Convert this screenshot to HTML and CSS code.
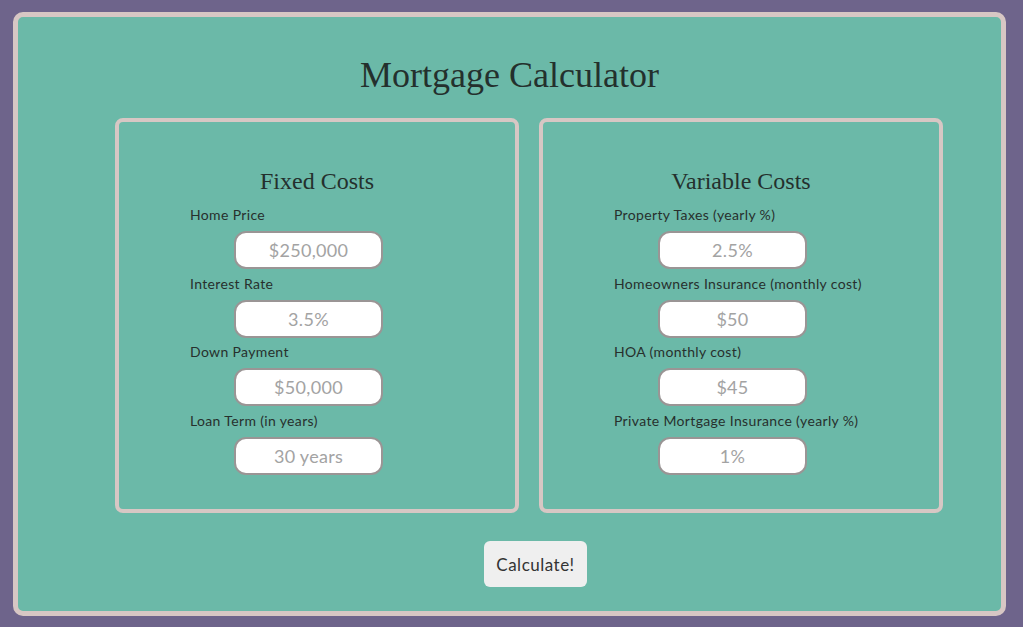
FILE: index.html
```html
<!DOCTYPE html>
<html>
<head>
<meta charset="utf-8">
<link rel="stylesheet" href="styles.css">
</head>
<body>
<div class="app">
  <h1 class="title">Mortgage Calculator</h1>
  <div class="panels">
    <section class="panel">
      <h2 class="panel-title">Fixed Costs</h2>
      <div class="field">
        <label class="label">Home Price</label>
        <input class="input" type="text" placeholder="$250,000">
      </div>
      <div class="field">
        <label class="label">Interest Rate</label>
        <input class="input" type="text" placeholder="3.5%">
      </div>
      <div class="field">
        <label class="label">Down Payment</label>
        <input class="input" type="text" placeholder="$50,000">
      </div>
      <div class="field">
        <label class="label">Loan Term (in years)</label>
        <input class="input" type="text" placeholder="30 years">
      </div>
    </section>
    <section class="panel">
      <h2 class="panel-title">Variable Costs</h2>
      <div class="field">
        <label class="label">Property Taxes (yearly %)</label>
        <input class="input" type="text" placeholder="2.5%">
      </div>
      <div class="field">
        <label class="label">Homeowners Insurance (monthly cost)</label>
        <input class="input" type="text" placeholder="$50">
      </div>
      <div class="field">
        <label class="label">HOA (monthly cost)</label>
        <input class="input" type="text" placeholder="$45">
      </div>
      <div class="field">
        <label class="label">Private Mortgage Insurance (yearly %)</label>
        <input class="input" type="text" placeholder="1%">
      </div>
    </section>
  </div>
  <div class="actions">
    <button class="btn" type="button">Calculate!</button>
  </div>
</div>
</body>
</html>
```
FILE: styles.css
```css
html, body {
  margin: 0;
  padding: 0;
}
body {
  background: #6e648b;
  padding: 12px 17px 11px 13px;
  height: 627px;
  box-sizing: border-box;
  font-family: Lato, "Open Sans", sans-serif;
  color: #2b3330;
}
.app {
  box-sizing: border-box;
  height: 604px;
  background: #6bb9a8;
  border: 5px solid #d7c7c4;
  border-radius: 10px;
  padding-top: 36px;
}
.title {
  margin: 0;
  font-family: "Liberation Serif", serif;
  font-weight: normal;
  font-size: 36px;
  line-height: 44px;
  text-align: center;
  color: #24302d;
}
.panels {
  display: flex;
  gap: 20px;
  margin-top: 21px;
  padding-left: 97px;
}
.panel {
  box-sizing: border-box;
  width: 404px;
  height: 395px;
  border: 4px solid #d7c7c4;
  border-radius: 8px;
  padding: 44px 0 0 71px;
}
.panel-title {
  margin: 0 0 10px -71px;
  font-family: "Liberation Serif", serif;
  font-weight: normal;
  font-size: 24px;
  line-height: 30px;
  text-align: center;
  color: #24302d;
}
.field {
  display: flex;
  flex-direction: column;
  align-items: flex-start;
  margin-bottom: 5.5px;
}
.label {
  font-size: 14px;
  line-height: 17px;
  letter-spacing: 0.35px;
  color: #27302d;
}
.input {
  box-sizing: border-box;
  margin: 8px 0 0 44px;
  width: 149px;
  height: 38px;
  border: 2px solid #9a9595;
  border-radius: 12px;
  background: #fff;
  text-align: center;
  font-family: Lato, "Open Sans", sans-serif;
  font-size: 18px;
  letter-spacing: 0.3px;
  color: #333;
  padding: 0 8px;
  outline: none;
}
.input::placeholder {
  color: #a3a3a3;
}
.actions {
  margin-top: 28px;
  padding-left: 466px;
}
.btn {
  width: 103px;
  height: 46px;
  border: none;
  border-radius: 6px;
  background: #efefef;
  font-family: Lato, "Open Sans", sans-serif;
  font-size: 17px;
  letter-spacing: 0.5px;
  color: #333;
  padding: 0;
  cursor: pointer;
}
```
